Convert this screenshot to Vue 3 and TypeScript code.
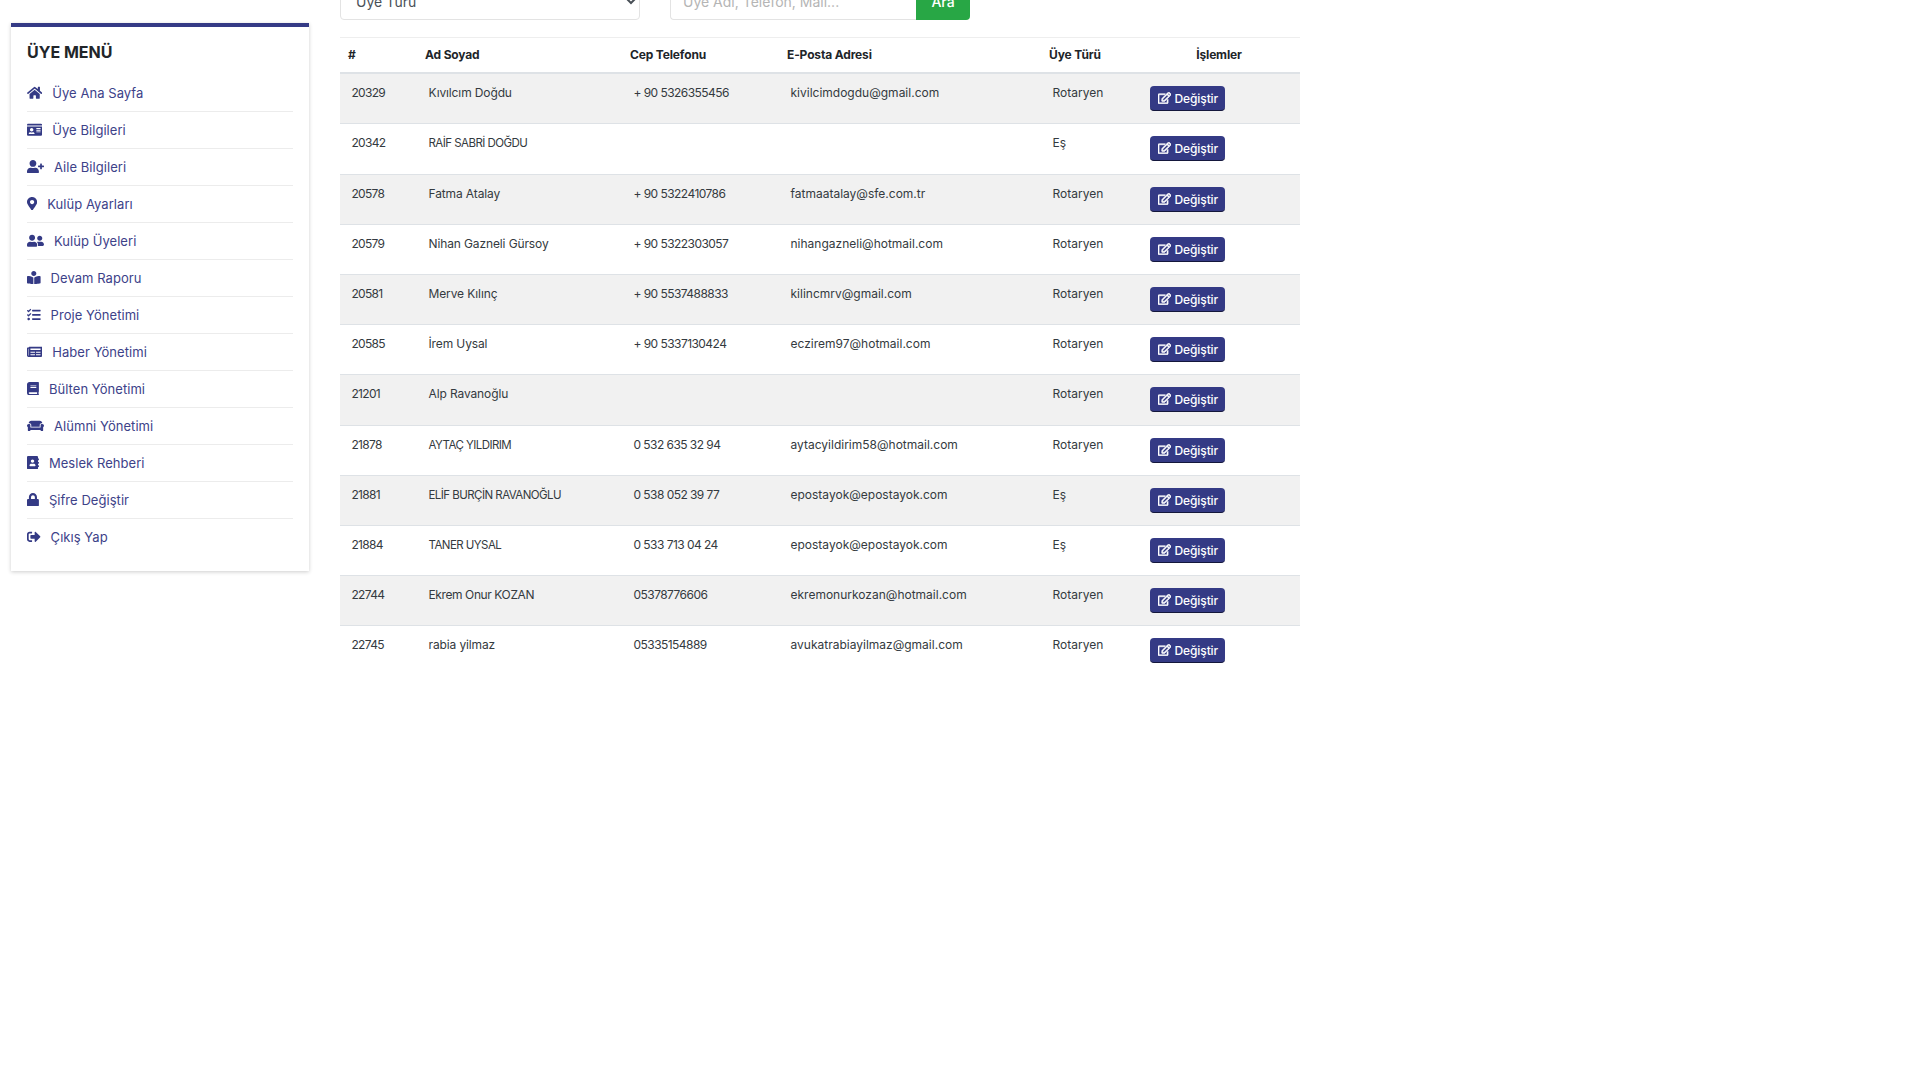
<script setup lang="ts">
interface MenuItem {
  label: string
  box: number
  d: string
}
interface Member {
  id: string
  name: string
  phone: string
  mail: string
  type: string
}

const menu: MenuItem[] = [
  { label: 'Üye Ana Sayfa', box: 576, d: 'M280.37 148.26L96 300.11V464a16 16 0 0 0 16 16l112.06-.29a16 16 0 0 0 15.92-16V368a16 16 0 0 1 16-16h64a16 16 0 0 1 16 16v95.64a16 16 0 0 0 16 16.05L464 480a16 16 0 0 0 16-16V300L295.67 148.26a12.19 12.19 0 0 0-15.3 0zM571.6 251.47L488 182.56V44.05a12 12 0 0 0-12-12h-56a12 12 0 0 0-12 12v72.61L318.47 43a48 48 0 0 0-61 0L4.34 251.47a12 12 0 0 0-1.6 16.9l25.5 31A12 12 0 0 0 45.15 301l235.22-193.74a12.19 12.19 0 0 1 15.3 0L530.9 301a12 12 0 0 0 16.9-1.6l25.5-31a12 12 0 0 0-1.7-16.93z' },
  { label: 'Üye Bilgileri', box: 576, d: 'M528 32H48C21.5 32 0 53.5 0 80v16h576V80c0-26.5-21.5-48-48-48zM0 432c0 26.5 21.5 48 48 48h480c26.5 0 48-21.5 48-48V128H0v304zm352-232c0-4.4 3.6-8 8-8h144c4.4 0 8 3.6 8 8v16c0 4.4-3.6 8-8 8H360c-4.4 0-8-3.6-8-8v-16zm0 64c0-4.4 3.6-8 8-8h144c4.4 0 8 3.6 8 8v16c0 4.4-3.6 8-8 8H360c-4.4 0-8-3.6-8-8v-16zm0 64c0-4.4 3.6-8 8-8h144c4.4 0 8 3.6 8 8v16c0 4.4-3.6 8-8 8H360c-4.4 0-8-3.6-8-8v-16zM176 192c35.3 0 64 28.7 64 64s-28.7 64-64 64-64-28.7-64-64 28.7-64 64-64zM67.1 396.2C75.5 370.5 99.6 352 128 352h8.2c12.3 5.1 25.7 8 39.8 8s27.6-2.9 39.8-8h8.2c28.4 0 52.5 18.5 60.9 44.2 3.2 9.9-5.2 19.8-15.6 19.8H82.7c-10.4 0-18.8-10-15.6-19.8z' },
  { label: 'Aile Bilgileri', box: 640, d: 'M624 208h-64v-64c0-8.8-7.2-16-16-16h-32c-8.8 0-16 7.2-16 16v64h-64c-8.8 0-16 7.2-16 16v32c0 8.8 7.2 16 16 16h64v64c0 8.8 7.2 16 16 16h32c8.8 0 16-7.2 16-16v-64h64c8.8 0 16-7.2 16-16v-32c0-8.8-7.2-16-16-16zm-400 48c70.7 0 128-57.3 128-128S294.7 0 224 0 96 57.3 96 128s57.3 128 128 128zm89.6 32h-16.7c-22.2 10.2-46.9 16-72.9 16s-50.6-5.8-72.9-16h-16.7C60.2 288 0 348.2 0 422.4V464c0 26.5 21.5 48 48 48h352c26.5 0 48-21.5 48-48v-41.6c0-74.2-60.2-134.4-134.4-134.4z' },
  { label: 'Kulüp Ayarları', box: 384, d: 'M172.268 501.67C26.97 291.031 0 255.028 0 192 0 85.961 85.961 0 192 0s192 85.961 192 192c0 63.028-26.97 99.031-172.268 309.67-9.535 13.774-29.93 13.773-39.464 0zM192 272c44.183 0 80-35.817 80-80s-35.817-80-80-80-80 35.817-80 80 35.817 80 80 80z' },
  { label: 'Kulüp Üyeleri', box: 640, d: 'M192 256c61.9 0 112-50.1 112-112S253.9 32 192 32 80 82.1 80 144s50.1 112 112 112zm76.8 32h-8.3c-20.8 10-43.9 16-68.5 16s-47.6-6-68.5-16h-8.3C51.6 288 0 339.6 0 403.2V432c0 26.5 21.5 48 48 48h288c26.5 0 48-21.5 48-48v-28.8c0-63.6-51.6-115.2-115.2-115.2zM480 256c53 0 96-43 96-96s-43-96-96-96-96 43-96 96 43 96 96 96zm48 32h-3.8c-13.9 4.8-28.6 8-44.2 8s-30.3-3.2-44.2-8H432c-20.4 0-39.2 5.9-55.7 15.4 24.4 26.3 39.7 61.2 39.7 99.8v38.4c0 2.2-.5 4.3-.6 6.4H592c26.5 0 48-21.5 48-48 0-61.9-50.1-112-112-112z' },
  { label: 'Devam Raporu', box: 512, d: 'M352 96c0-53.02-42.98-96-96-96s-96 42.98-96 96 42.98 96 96 96 96-42.98 96-96zM233.59 241.1c-59.33-36.32-155.43-46.3-203.79-49.05C13.55 191.13 0 203.51 0 219.14v222.8c0 14.33 11.59 26.28 26.49 27.05 43.66 2.29 131.99 10.68 193.04 41.43 9.37 4.72 20.48-1.71 20.48-11.87V252.56c-.01-4.67-2.32-8.95-6.42-11.46zm248.61-49.05c-48.35 2.74-144.46 12.73-203.78 49.05-4.1 2.51-6.41 6.96-6.41 11.63v245.79c0 10.19 11.14 16.63 20.54 11.9 61.04-30.72 149.32-39.11 192.97-41.4 14.9-.78 26.49-12.73 26.49-27.06V219.14c-.01-15.63-13.56-28.01-29.81-27.09z' },
  { label: 'Proje Yönetimi', box: 512, d: 'M139.61 35.5a12 12 0 0 0-17 0L58.93 98.81l-22.7-22.12a12 12 0 0 0-17 0L3.53 92.41a12 12 0 0 0 0 17l47.59 47.4a12.78 12.78 0 0 0 17.61 0l15.59-15.62L156.52 69a12.09 12.09 0 0 0 .09-17zm0 159.19a12 12 0 0 0-17 0l-63.68 63.72-22.7-22.1a12 12 0 0 0-17 0L3.53 252a12 12 0 0 0 0 17L51 316.5a12.77 12.77 0 0 0 17.6 0l15.7-15.69 72.2-72.22a12 12 0 0 0 .09-16.9zM64 368c-26.49 0-48.59 21.5-48.59 48S37.53 464 64 464a48 48 0 0 0 0-96zm432 16H208a16 16 0 0 0-16 16v32a16 16 0 0 0 16 16h288a16 16 0 0 0 16-16v-32a16 16 0 0 0-16-16zm0-320H208a16 16 0 0 0-16 16v32a16 16 0 0 0 16 16h288a16 16 0 0 0 16-16V80a16 16 0 0 0-16-16zm0 160H208a16 16 0 0 0-16 16v32a16 16 0 0 0 16 16h288a16 16 0 0 0 16-16v-32a16 16 0 0 0-16-16z' },
  { label: 'Haber Yönetimi', box: 576, d: 'M552 64H88c-13.255 0-24 10.745-24 24v8H24c-13.255 0-24 10.745-24 24v272c0 30.928 25.072 56 56 56h472c26.51 0 48-21.49 48-48V88c0-13.255-10.745-24-24-24zM56 400a8 8 0 0 1-8-8V144h16v248a8 8 0 0 1-8 8zm236-16H140c-6.627 0-12-5.373-12-12v-8c0-6.627 5.373-12 12-12h152c6.627 0 12 5.373 12 12v8c0 6.627-5.373 12-12 12zm208 0H348c-6.627 0-12-5.373-12-12v-8c0-6.627 5.373-12 12-12h152c6.627 0 12 5.373 12 12v8c0 6.627-5.373 12-12 12zm-208-96H140c-6.627 0-12-5.373-12-12v-8c0-6.627 5.373-12 12-12h152c6.627 0 12 5.373 12 12v8c0 6.627-5.373 12-12 12zm208 0H348c-6.627 0-12-5.373-12-12v-8c0-6.627 5.373-12 12-12h152c6.627 0 12 5.373 12 12v8c0 6.627-5.373 12-12 12zm0-96H140c-6.627 0-12-5.373-12-12v-40c0-6.627 5.373-12 12-12h360c6.627 0 12 5.373 12 12v40c0 6.627-5.373 12-12 12z' },
  { label: 'Bülten Yönetimi', box: 448, d: 'M448 360V24c0-13.3-10.7-24-24-24H96C43 0 0 43 0 96v320c0 53 43 96 96 96h328c13.3 0 24-10.7 24-24v-16c0-7.5-3.5-14.3-8.9-18.7-4.2-15.4-4.2-59.3 0-74.7 5.4-4.3 8.9-11.1 8.9-18.6zM128 134c0-3.3 2.7-6 6-6h212c3.3 0 6 2.7 6 6v20c0 3.3-2.7 6-6 6H134c-3.3 0-6-2.7-6-6v-20zm0 64c0-3.3 2.7-6 6-6h212c3.3 0 6 2.7 6 6v20c0 3.3-2.7 6-6 6H134c-3.3 0-6-2.7-6-6v-20zm253.4 250H96c-17.7 0-32-14.3-32-32 0-17.6 14.4-32 32-32h285.4c-1.9 17.1-1.9 46.9 0 64z' },
  { label: 'Alümni Yönetimi', box: 640, d: 'M160 224v64h320v-64c0-35.3 28.7-64 64-64h32c0-53-43-96-96-96H160c-53 0-96 43-96 96h32c35.3 0 64 28.7 64 64zm416-32h-32c-17.7 0-32 14.3-32 32v96H128v-96c0-17.7-14.3-32-32-32H64c-35.3 0-64 28.7-64 64 0 23.6 13 44 32 55.1V432c0 8.8 7.2 16 16 16h64c8.8 0 16-7.2 16-16v-16h384v16c0 8.8 7.2 16 16 16h64c8.8 0 16-7.2 16-16V311.1c19-11.1 32-31.5 32-55.1 0-35.3-28.7-64-64-64z' },
  { label: 'Meslek Rehberi', box: 448, d: 'M436 160c6.6 0 12-5.4 12-12v-40c0-6.6-5.4-12-12-12h-20V48c0-26.5-21.5-48-48-48H48C21.5 0 0 21.5 0 48v416c0 26.5 21.5 48 48 48h320c26.5 0 48-21.5 48-48v-48h20c6.6 0 12-5.4 12-12v-40c0-6.6-5.4-12-12-12h-20v-64h20c6.6 0 12-5.4 12-12v-40c0-6.6-5.4-12-12-12h-20v-64h20zm-228-32c35.3 0 64 28.7 64 64s-28.7 64-64 64-64-28.7-64-64 28.7-64 64-64zm112 236.8c0 10.6-10 19.2-22.4 19.2H118.4C106 384 96 375.4 96 364.8v-19.2c0-31.8 30.1-57.6 67.2-57.6h5c12.3 5.1 25.7 8 39.8 8s27.6-2.9 39.8-8h5c37.1 0 67.2 25.8 67.2 57.6v19.2z' },
  { label: 'Şifre Değiştir', box: 448, d: 'M400 224h-24v-72C376 68.2 307.8 0 224 0S72 68.2 72 152v72H48c-26.5 0-48 21.5-48 48v192c0 26.5 21.5 48 48 48h352c26.5 0 48-21.5 48-48V272c0-26.5-21.5-48-48-48zm-104 0H152v-72c0-39.7 32.3-72 72-72s72 32.3 72 72v72z' },
  { label: 'Çıkış Yap', box: 512, d: 'M497 273L329 441c-15 15-41 4.5-41-17v-96H152c-13.3 0-24-10.7-24-24v-96c0-13.3 10.7-24 24-24h136V88c0-21.4 25.9-32 41-17l168 168c9.3 9.4 9.3 24.6 0 34zM192 436v-40c0-6.6-5.4-12-12-12H96c-17.7 0-32-14.3-32-32V160c0-17.7 14.3-32 32-32h84c6.6 0 12-5.4 12-12V76c0-6.6-5.4-12-12-12H96c-53 0-96 43-96 96v192c0 53 43 96 96 96h84c6.6 0 12-5.4 12-12z' }
]

const members: Member[] = [
  { id: '20329', name: 'Kıvılcım Doğdu', phone: '+ 90 5326355456', mail: 'kivilcimdogdu@gmail.com', type: 'Rotaryen' },
  { id: '20342', name: 'RAİF SABRİ DOĞDU', phone: '', mail: '', type: 'Eş' },
  { id: '20578', name: 'Fatma Atalay', phone: '+ 90 5322410786', mail: 'fatmaatalay@sfe.com.tr', type: 'Rotaryen' },
  { id: '20579', name: 'Nihan Gazneli Gürsoy', phone: '+ 90 5322303057', mail: 'nihangazneli@hotmail.com', type: 'Rotaryen' },
  { id: '20581', name: 'Merve Kılınç', phone: '+ 90 5537488833', mail: 'kilincmrv@gmail.com', type: 'Rotaryen' },
  { id: '20585', name: 'İrem Uysal', phone: '+ 90 5337130424', mail: 'eczirem97@hotmail.com', type: 'Rotaryen' },
  { id: '21201', name: 'Alp Ravanoğlu', phone: '', mail: '', type: 'Rotaryen' },
  { id: '21878', name: 'AYTAÇ YILDIRIM', phone: '0 532 635 32 94', mail: 'aytacyildirim58@hotmail.com', type: 'Rotaryen' },
  { id: '21881', name: 'ELİF BURÇİN RAVANOĞLU', phone: '0 538 052 39 77', mail: 'epostayok@epostayok.com', type: 'Eş' },
  { id: '21884', name: 'TANER UYSAL', phone: '0 533 713 04 24', mail: 'epostayok@epostayok.com', type: 'Eş' },
  { id: '22744', name: 'Ekrem Onur KOZAN', phone: '05378776606', mail: 'ekremonurkozan@hotmail.com', type: 'Rotaryen' },
  { id: '22745', name: 'rabia yilmaz', phone: '05335154889', mail: 'avukatrabiayilmaz@gmail.com', type: 'Rotaryen' }
]

const nameClass = (name: string) => {
  if (name === name.toLocaleUpperCase('tr')) return 'name caps'
  if (/[A-Z]{3}/.test(name)) return 'name part-caps'
  return 'name'
}

const editIcon = 'M402.3 344.9l32-32c5-5 13.7-1.5 13.7 5.7V464c0 26.5-21.5 48-48 48H48c-26.5 0-48-21.5-48-48V112c0-26.5 21.5-48 48-48h273.5c7.1 0 10.7 8.6 5.7 13.7l-32 32c-1.5 1.5-3.5 2.3-5.7 2.3H48v352h352V350.5c0-2.1.8-4.1 2.3-5.6zm156.6-201.8L296.3 405.7l-90.4 10c-26.2 2.9-48.5-19.2-45.6-45.6l10-90.4L432.9 17.1c22.9-22.9 59.9-22.9 82.7 0l43.2 43.2c22.9 22.9 22.9 60 .1 82.8zM460.1 174L402 115.9 216.2 301.8l-7.3 65.3 65.3-7.3L460.1 174zm64.8-79.7l-43.2-43.2c-4.1-4.1-10.8-4.1-14.8 0L436 82l58.1 58.1 30.9-30.9c4-4.2 4-10.8-.1-14.9z'
</script>

<template>
  <div class="page">
    <aside class="sidebar">
      <h3 class="sidebar-title">ÜYE MENÜ</h3>
      <ul class="menu">
        <li v-for="item in menu" :key="item.label" class="menu-item">
          <svg class="menu-icon" :viewBox="`0 0 ${item.box} 512`" fill="currentColor">
            <path :d="item.d" />
          </svg>
          <span>{{ item.label }}</span>
        </li>
      </ul>
    </aside>

    <main class="content">
      <div class="filters">
        <select class="type-select">
          <option>Üye Türü</option>
        </select>
        <div class="search">
          <input class="search-input" type="text" placeholder="Üye Adı, Telefon, Mail..." />
          <button class="search-btn" type="button">Ara</button>
        </div>
      </div>

      <table class="members">
        <colgroup>
          <col class="c1" /><col class="c2" /><col class="c3" /><col class="c4" /><col class="c5" /><col class="c6" />
        </colgroup>
        <thead>
          <tr>
            <th>#</th>
            <th>Ad Soyad</th>
            <th>Cep Telefonu</th>
            <th>E-Posta Adresi</th>
            <th>Üye Türü</th>
            <th class="center">İşlemler</th>
          </tr>
        </thead>
        <tbody>
          <tr v-for="m in members" :key="m.id">
            <td class="num">{{ m.id }}</td>
            <td :class="nameClass(m.name)">{{ m.name }}</td>
            <td class="phone">{{ m.phone }}</td>
            <td>{{ m.mail }}</td>
            <td>{{ m.type }}</td>
            <td>
              <button class="edit-btn" type="button">
                <svg class="edit-icon" viewBox="0 0 576 512" fill="currentColor" stroke="currentColor" stroke-width="24"><path :d="editIcon" /></svg>
                Değiştir
              </button>
            </td>
          </tr>
        </tbody>
      </table>
    </main>
  </div>
</template>

<style scoped>
.page {
  display: flex;
  align-items: flex-start;
  font-family: Inter, "Noto Sans", sans-serif;
  color: #212529;
}

.sidebar {
  width: 298px;
  margin: 23px 0 0 11px;
  padding: 16px 16px 20px;
  box-sizing: border-box;
  height: 548px;
  background: #fff;
  border-top: 4px solid #343a85;
  box-shadow: 0 1px 4px rgba(0, 0, 0, 0.2);
}

.sidebar-title {
  margin: 0 0 13px;
  font-size: 16px;
  line-height: 19px;
  font-weight: 700;
  color: #212529;
}

.menu {
  list-style: none;
  margin: 0;
  padding: 0;
}

.menu-item {
  display: flex;
  align-items: center;
  gap: 10px;
  height: 37px;
  box-sizing: border-box;
  padding-bottom: 1px;
  font-size: 13px;
  letter-spacing: 0.05px;
  color: #3d4289;
  border-bottom: 1px solid #ececec;
}

.menu-item:last-child {
  border-bottom: 0;
}

.menu-icon {
  height: 13.6px;
  width: auto;
  flex: none;
  color: #343a85;
}

.content {
  width: 960px;
  margin: -18px 0 0 31px;
}

.filters {
  display: flex;
  gap: 30px;
  margin-bottom: 17px;
}

.type-select {
  width: 300px;
  height: 38px;
  padding: 0 11px;
  background: #fff;
  border: 1px solid #e3e3e3;
  border-radius: 4px;
  font-family: inherit;
  font-size: 14px;
  color: #495057;
}

.search {
  display: flex;
  width: 300px;
}

.search-input {
  flex: 1;
  min-width: 0;
  height: 38px;
  box-sizing: border-box;
  padding: 0 12px;
  border: 1px solid #e3e3e3;
  border-right: 0;
  border-radius: 4px 0 0 4px;
  font-family: inherit;
  font-size: 14px;
}

.search-input::placeholder {
  color: #b5b5b5;
}

.search-btn {
  width: 54px;
  height: 38px;
  border: 0;
  border-radius: 0 4px 4px 0;
  background: #28a745;
  color: #fff;
  font-family: inherit;
  font-size: 14px;
  font-weight: 500;
}

.members {
  width: 960px;
  table-layout: fixed;
  border-collapse: separate;
  border-spacing: 0;
  font-size: 12px;
  line-height: 18px;
  color: #343a40;
}

.c1 { width: 77px; }
.c2 { width: 205px; }
.c3 { width: 157px; }
.c4 { width: 262px; }
.c5 { width: 97px; }
.c6 { width: 162px; }

.members th {
  height: 37px;
  box-sizing: border-box;
  padding: 0 8px;
  text-align: left;
  font-weight: 700;
  letter-spacing: -0.15px;
  color: #212529;
  border-top: 1px solid #eeeeee;
  border-bottom: 2px solid #dee2e6;
}

.members th.center {
  text-align: center;
}

.members td {
  height: 50px;
  box-sizing: border-box;
  padding: 10px 11.5px 12px;
  vertical-align: top;
  border-bottom: 1px solid #dee2e6;
}

/* rows in the original land on fractional heights, roughly one in five is a pixel taller */
.members tbody tr:nth-child(5n + 2) td {
  height: 51px;
}

.members tbody tr:last-child td {
  border-bottom: 0;
}

.members td.num {
  letter-spacing: -0.7px;
}

.members td.phone {
  letter-spacing: -0.55px;
}

.members td.name {
  letter-spacing: -0.12px;
}

.members td.part-caps {
  letter-spacing: -0.4px;
}

.members td.caps {
  font-size: 11.5px;
  letter-spacing: -0.55px;
}

.members tbody tr:nth-child(odd) {
  background: #f1f1f1;
}

.edit-btn {
  display: flex;
  align-items: center;
  gap: 4px;
  width: 75px;
  height: 25px;
  margin-top: 2px;
  padding: 0 0 0 8px;
  box-sizing: border-box;
  background: #343a85;
  border: 0;
  border-bottom: 1px solid #14173c;
  border-radius: 4px;
  color: #fff;
  font-family: inherit;
  font-size: 12px;
  font-weight: 500;
  letter-spacing: -0.1px;
}

.edit-icon {
  width: 13px;
  height: 12px;
  flex: none;
}
</style>

<style>
html, body {
  background: #fff;
}
</style>
